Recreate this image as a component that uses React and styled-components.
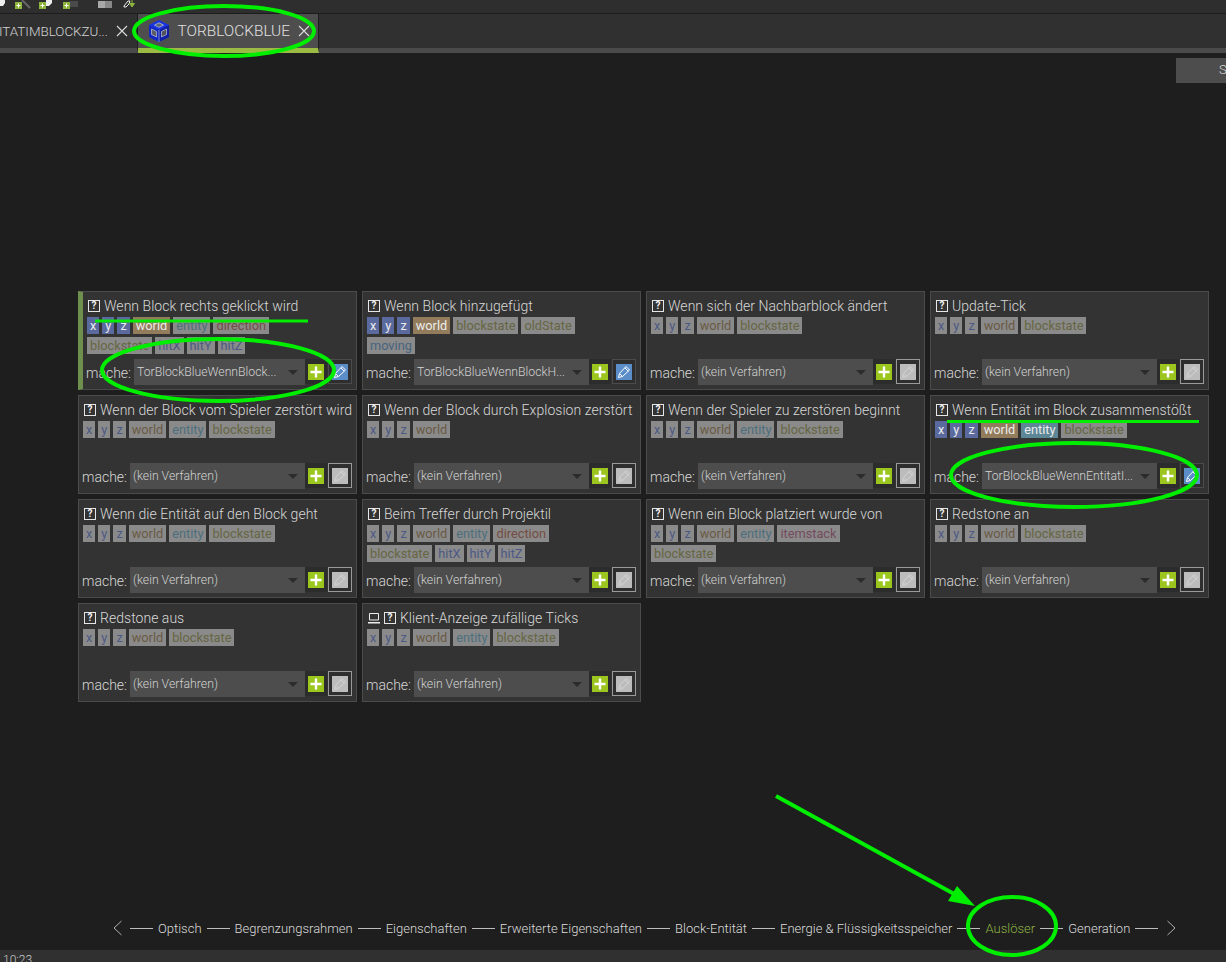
import React from "react";
import styled, { createGlobalStyle } from "styled-components";

const TAG_COLORS = {
  num: { on: "#5b6a9e", text: "#4d5985" },
  world: { on: "#937c5c", text: "#6b5a44" },
  entity: { on: "#5d8797", text: "#4b6f7e" },
  state: { on: "#7d7d55", text: "#666642" },
  dir: { on: "#8f6154", text: "#754c42" },
  stack: { on: "#8f5f73", text: "#754a5e" },
  bool: { on: "#54708f", text: "#466280" },
};

const NUM = (name, on) => ({ name, kind: "num", on });

const xyz = (on) => [NUM("x", on), NUM("y", on), NUM("z", on)];
const world = (on) => ({ name: "world", kind: "world", on });
const entity = (on) => ({ name: "entity", kind: "entity", on });
const blockstate = { name: "blockstate", kind: "state" };
const direction = { name: "direction", kind: "dir" };
const hits = [NUM("hitX"), NUM("hitY"), NUM("hitZ")];

const triggers = [
  {
    title: "Wenn Block rechts geklickt wird",
    tags: [...xyz(true), world(true), entity(), direction, blockstate, ...hits],
    proc: "TorBlockBlueWennBlock...",
    marked: true,
  },
  {
    title: "Wenn Block hinzugefügt",
    tags: [
      ...xyz(true),
      world(true),
      blockstate,
      { name: "oldState", kind: "state" },
      { name: "moving", kind: "bool" },
    ],
    proc: "TorBlockBlueWennBlockH...",
  },
  { title: "Wenn sich der Nachbarblock ändert", tags: [...xyz(), world(), blockstate] },
  { title: "Update-Tick", tags: [...xyz(), world(), blockstate] },
  { title: "Wenn der Block vom Spieler zerstört wird", tags: [...xyz(), world(), entity(), blockstate] },
  { title: "Wenn der Block durch Explosion zerstört", tags: [...xyz(), world()] },
  { title: "Wenn der Spieler zu zerstören beginnt", tags: [...xyz(), world(), entity(), blockstate] },
  {
    title: "Wenn Entität im Block zusammenstößt",
    tags: [...xyz(true), world(true), entity(true), blockstate],
    proc: "TorBlockBlueWennEntitatI...",
  },
  { title: "Wenn die Entität auf den Block geht", tags: [...xyz(), world(), entity(), blockstate] },
  { title: "Beim Treffer durch Projektil", tags: [...xyz(), world(), entity(), direction, blockstate, ...hits] },
  {
    title: "Wenn ein Block platziert wurde von",
    tags: [...xyz(), world(), entity(), { name: "itemstack", kind: "stack" }, blockstate],
  },
  { title: "Redstone an", tags: [...xyz(), world(), blockstate] },
  { title: "Redstone aus", tags: [...xyz(), world(), blockstate] },
  { title: "Klient-Anzeige zufällige Ticks", tags: [...xyz(), world(), entity(), blockstate], client: true },
];

const sections = [
  "Optisch",
  "Begrenzungsrahmen",
  "Eigenschaften",
  "Erweiterte Eigenschaften",
  "Block-Entität",
  "Energie & Flüssigkeitsspeicher",
  "Auslöser",
  "Generation",
];

const GlobalStyle = createGlobalStyle`
  html, body {
    margin: 0;
    padding: 0;
    background: #1e1e1e;
    overflow: hidden;
  }
  * {
    box-sizing: border-box;
  }
`;

const Page = styled.div`
  position: relative;
  width: 1226px;
  height: 962px;
  display: flex;
  flex-direction: column;
  overflow: hidden;
  background: #1e1e1e;
  color: #d6d6d6;
  font-family: Roboto, "Liberation Sans", sans-serif;
  font-weight: 300;
`;

const Toolbar = styled.div`
  height: 14px;
  flex: none;
  display: flex;
  align-items: flex-start;
  background: #2e2e2e;
  border-bottom: 1px solid #1c1c1c;
  overflow: hidden;
`;

const TabBar = styled.div`
  height: 39px;
  flex: none;
  display: flex;
  background: #303030;
`;

const Tab = styled.div`
  flex: none;
  width: ${(p) => p.$width}px;
  display: flex;
  align-items: center;
  justify-content: flex-end;
  overflow: hidden;
  white-space: nowrap;
  font-size: ${(p) => (p.$active ? "15.4px" : "13.4px")};
  padding-right: ${(p) => p.$pad}px;
  color: ${(p) => (p.$active ? "#e0e0e0" : "#d2d2d2")};
  background: ${(p) => (p.$active ? "#4e4e4e" : "#303030")};
  border-bottom: 5px solid ${(p) => (p.$active ? "#9bbb45" : "#4a4a4a")};
  border-right: 1px solid #1e1e1e;
`;

const TabFill = styled.div`
  flex: 1;
  border-bottom: 5px solid #4a4a4a;
`;

const TabLabel = styled.span`
  flex: none;
`;

const TabClose = styled.svg`
  flex: none;
  width: 12px;
  height: 12px;
  margin-left: 8px;
`;

const BlockIcon = styled.svg`
  flex: none;
  width: 24px;
  height: 24px;
  margin-right: 7px;
`;

const Main = styled.main`
  flex: 1;
  display: flex;
  flex-direction: column;
  min-height: 0;
`;

const TopRow = styled.div`
  display: flex;
  justify-content: flex-end;
  padding-top: 5px;
`;

const SaveButton = styled.div`
  width: 50px;
  height: 25px;
  padding: 4px 0 0 43px;
  background: #4d4d4d;
  font-size: 13px;
  white-space: nowrap;
  overflow: hidden;
  color: #d6d6d6;
`;

const Grid = styled.div`
  display: grid;
  grid-template-columns: repeat(4, 279px);
  grid-auto-rows: 99px;
  gap: 5px;
  margin: 208px 0 0 78px;
`;

const Card = styled.section`
  display: flex;
  flex-direction: column;
  padding: 5px 4px 4px;
  background: #333333;
  border: 1px solid #4b4b4b;
  border-left: ${(p) => (p.$marked ? "5px solid #6f8f4e" : "1px solid #4b4b4b")};
`;

const Title = styled.div`
  display: flex;
  align-items: center;
  height: 17px;
  padding-left: 1px;
  font-size: 14px;
  letter-spacing: 0.03px;
  white-space: nowrap;
  color: #d8d8d8;
`;

const Help = styled.span`
  flex: none;
  width: 12px;
  height: 12px;
  margin-right: 4px;
  display: flex;
  align-items: center;
  justify-content: center;
  border: 1px solid #e6e6e6;
  color: #f0f0f0;
  font-size: 10px;
  font-weight: 700;
  line-height: 1;
`;

const ClientIcon = styled.svg`
  flex: none;
  width: 12px;
  height: 12px;
  margin-right: 4px;
`;

const Tags = styled.div`
  display: flex;
  flex-wrap: wrap;
  gap: 3px;
  margin-top: 3px;
  max-width: 240px;
`;

const Tag = styled.span`
  height: 17px;
  padding: 0 3px;
  font-size: 12.75px;
  font-weight: 400;
  line-height: 17px;
  background: ${(p) => (p.$on ? TAG_COLORS[p.$kind].on : "#8a8a8a")};
  color: ${(p) => (p.$on ? "#ececec" : TAG_COLORS[p.$kind].text)};
`;

const Footer = styled.div`
  margin: auto 0 0 -1px;
  display: flex;
  align-items: flex-start;
  height: 26px;
`;

const DoLabel = styled.span`
  flex: none;
  width: 48px;
  font-size: 14px;
  line-height: 28px;
  color: #d8d8d8;
`;

const Select = styled.div`
  flex: 1;
  min-width: 0;
  height: 26px;
  display: flex;
  align-items: center;
  padding: 0 7px 1px 3px;
  background: #4d4d4d;
  font-size: 12.25px;
  color: #d2d2d2;
  white-space: nowrap;
  overflow: hidden;
`;

const SelectText = styled.span`
  flex: 1;
`;

const Caret = styled.span`
  flex: none;
  width: 0;
  height: 0;
  margin-top: 1px;
  border-left: 5.5px solid transparent;
  border-right: 5.5px solid transparent;
  border-top: 5px solid #2c2c2c;
`;

const PlusBox = styled.div`
  flex: none;
  width: 22px;
  height: 25px;
  display: flex;
  align-items: center;
  justify-content: center;
  background: #2c2c2c;
`;

const PlusIcon = styled.svg`
  width: 16px;
  height: 16px;
  background: #9bc61e;
`;

const EditBox = styled.div`
  flex: none;
  width: 24px;
  height: 25px;
  margin-left: 1px;
  display: flex;
  align-items: center;
  justify-content: center;
  border: 1px solid ${(p) => (p.$enabled ? "#4b4b4b" : "#9a9a9a")};
  background: #2e2e2e;
`;

const EditIcon = styled.svg`
  width: 16px;
  height: 16px;
  background: ${(p) => (p.$enabled ? "#5b8ec8" : "#bcbcbc")};
`;

const Nav = styled.nav`
  margin-top: auto;
  height: 20px;
  margin-bottom: 12px;
  padding-left: 112px;
  display: flex;
  align-items: center;
  gap: 5px;
  font-size: 13px;
  white-space: nowrap;
  color: #d8d8d8;
`;

const NavLine = styled.span`
  flex: none;
  width: 23px;
  height: 1px;
  background: #bdbdbd;
`;

const NavItem = styled.span`
  flex: none;
  color: ${(p) => (p.$active ? "#8fb343" : "#dcdcdc")};
`;

const Chevron = styled.svg`
  flex: none;
  width: 11px;
  height: 16px;
  margin: ${(p) => p.$margin};
`;

const StatusBar = styled.footer`
  height: 12px;
  flex: none;
  padding: 3px 0 0 3px;
  background: #303030;
  font-size: 12px;
  line-height: 14px;
  color: #c8c8c8;
`;

const Overlay = styled.svg`
  position: absolute;
  left: 0;
  top: 0;
  width: 1226px;
  height: 962px;
  pointer-events: none;
`;

function Plus() {
  return (
    <PlusIcon viewBox="0 0 16 16">
      <path d="M8 2.500v11M2.500 8h11" stroke="#fff" strokeWidth="2.4" fill="none" />
    </PlusIcon>
  );
}

function Pencil({ enabled }) {
  return (
    <EditIcon viewBox="0 0 16 16" $enabled={enabled}>
      <path
        d="M2.500 13.500l1-4 6.500-7 3.500 3.500-7 6.500zM8.800 3.800l3.500 3.500M3.500 9.500l3 3"
        stroke={enabled ? "#fff" : "#d2d2d2"}
        strokeWidth="1"
        fill="none"
      />
    </EditIcon>
  );
}

function Trigger({ title, tags, proc, marked, client }) {
  return (
    <Card $marked={marked}>
      <Title>
        {client && (
          <ClientIcon viewBox="0 0 12 12">
            <path d="M1.500 1.500h9v6.500h-9z" stroke="#eee" fill="none" />
            <path d="M0 10h12v1.500H0z" fill="#eee" />
          </ClientIcon>
        )}
        <Help>?</Help>
        {title}
      </Title>
      <Tags>
        {tags.map((tag) => (
          <Tag key={tag.name} $kind={tag.kind} $on={tag.on}>
            {tag.name}
          </Tag>
        ))}
      </Tags>
      <Footer>
        <DoLabel>mache:</DoLabel>
        <Select>
          <SelectText>{proc || "(kein Verfahren)"}</SelectText>
          <Caret />
        </Select>
        <PlusBox>
          <Plus />
        </PlusBox>
        <EditBox $enabled={!!proc}>
          <Pencil enabled={!!proc} />
        </EditBox>
      </Footer>
    </Card>
  );
}

function ToolbarIcons() {
  return (
    <svg width="140" height="13" viewBox="0 0 140 13">
      <path d="M0 0h5v3l-2 3H0z" fill="#eee" />
      <path d="M22 0l8 8" stroke="#666" strokeWidth="2" />
      <rect x="15" y="2" width="7" height="7" fill="#8db53c" />
      <path d="M18.500 3.500v4M16.500 5.500h4" stroke="#fff" />
      <path d="M46 0h6v3l-3 3h-3z" fill="#eee" />
      <rect x="39" y="2" width="7" height="7" fill="#8db53c" />
      <path d="M42.500 3.500v4M40.500 5.500h4" stroke="#fff" />
      <path d="M70 1h8v6h-8z" fill="#4a4a4a" />
      <rect x="63" y="2" width="7" height="7" fill="#8db53c" />
      <path d="M66.500 3.500v4M64.500 5.500h4" stroke="#fff" />
      <path d="M98 1h7v7h-7z" fill="#a8a8a8" />
      <path d="M105 1h7v7h-7z" fill="#888" />
      <path d="M124 6l4-5h2l-1 3-3 3h-2z" stroke="#eee" fill="none" />
      <path d="M132 0v4M129.500 3.500h5l-2.500 3.500z" fill="#8db53c" stroke="#8db53c" />
    </svg>
  );
}

function TorBlock() {
  return (
    <BlockIcon viewBox="0 0 24 24">
      <path d="M12 1l10 5v12l-10 5-10-5V6z" fill="#1a34e0" />
      <path d="M2 6l10 5v12L2 18z" fill="#1428c0" />
      <path d="M22 6l-10 5v12l10-5z" fill="#0f1fa4" />
      <path d="M12 3.800l4.500 2.300-4.500 2.300-4.500-2.300z" fill="#5a6478" stroke="#d4d8e8" strokeWidth="0.6" />
      <path d="M4.500 10l5 2.500v5.500l-5-2.500z" fill="#5c5c66" stroke="#d4d8e8" strokeWidth="0.6" />
      <path d="M19.500 10l-5 2.500v5.500l5-2.500z" fill="#50505c" stroke="#d4d8e8" strokeWidth="0.6" />
      <path d="M12 11v12" stroke="#c0cce8" strokeWidth="0.6" />
    </BlockIcon>
  );
}

function CloseX() {
  return (
    <TabClose viewBox="0 0 12 12">
      <path d="M1 1l10 10M11 1L1 11" stroke="#dcdcdc" strokeWidth="1.1" fill="none" />
    </TabClose>
  );
}

export default function App() {
  return (
    <Page>
      <GlobalStyle />
      <Toolbar>
        <ToolbarIcons />
      </Toolbar>
      <TabBar>
        <Tab $width={138} $pad={9}>
          <TabLabel>ENTITATIMBLOCKZU...</TabLabel>
          <CloseX />
        </Tab>
        <Tab $width={181} $pad={8} $active>
          <TorBlock />
          <TabLabel>TORBLOCKBLUE</TabLabel>
          <CloseX />
        </Tab>
        <TabFill />
      </TabBar>
      <Main>
        <TopRow>
          <SaveButton>Speichern</SaveButton>
        </TopRow>
        <Grid>
          {triggers.map((t) => (
            <Trigger key={t.title} {...t} />
          ))}
        </Grid>
        <Nav>
          <Chevron viewBox="0 0 11 16" $margin="0 2px 0 0">
            <path d="M9.500 1L2 8l7.500 7" stroke="#b0b0b0" fill="none" />
          </Chevron>
          {sections.map((s) => (
            <React.Fragment key={s}>
              <NavLine />
              <NavItem $active={s === "Auslöser"}>{s}</NavItem>
            </React.Fragment>
          ))}
          <NavLine />
          <Chevron viewBox="0 0 11 16" $margin="0 0 0 3px">
            <path d="M1.500 1L9 8l-7.500 7" stroke="#b0b0b0" fill="none" />
          </Chevron>
        </Nav>
      </Main>
      <StatusBar>10:23</StatusBar>
      <Overlay viewBox="0 0 1226 962" fill="none" stroke="#00ee00">
        <ellipse cx="224" cy="31" rx="90" ry="25" strokeWidth="4" />
        <path d="M95 321h213" strokeWidth="3" />
        <ellipse cx="218" cy="370" rx="116" ry="31" strokeWidth="4" />
        <path d="M947 421.500h252" strokeWidth="3" />
        <ellipse cx="1074" cy="475" rx="123" ry="32" strokeWidth="4" />
        <ellipse cx="1012" cy="926" rx="44" ry="29" strokeWidth="4" />
        <path d="M776 796l180 99" strokeWidth="4" />
        <path d="M975 906l-27-5 9-15z" fill="#00ee00" stroke="none" />
      </Overlay>
    </Page>
  );
}
